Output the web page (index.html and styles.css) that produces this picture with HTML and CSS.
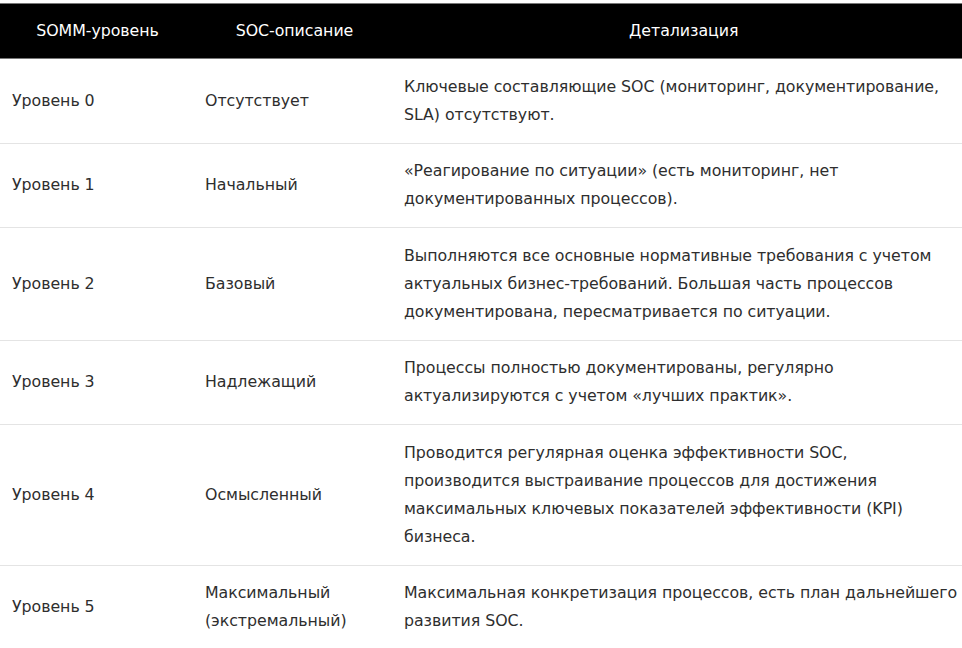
FILE: index.html
```html
<!DOCTYPE html>
<html lang="ru">
<head>
<meta charset="utf-8">
<title>SOMM</title>
<link rel="stylesheet" href="styles.css">
</head>
<body>
<div class="wrap">
<table class="somm">
  <colgroup>
    <col class="c1">
    <col class="c2">
    <col class="c3">
  </colgroup>
  <thead>
    <tr>
      <th>SOMM-уровень</th>
      <th>SOC-описание</th>
      <th class="last">Детализация</th>
    </tr>
  </thead>
  <tbody>
    <tr>
      <td>Уровень 0</td>
      <td>Отсутствует</td>
      <td>Ключевые составляющие SOC (мониторинг, документирование, SLA) отсутствуют.</td>
    </tr>
    <tr>
      <td>Уровень 1</td>
      <td>Начальный</td>
      <td>«Реагирование по ситуации» (есть мониторинг, нет документированных процессов).</td>
    </tr>
    <tr>
      <td>Уровень 2</td>
      <td>Базовый</td>
      <td>Выполняются все основные нормативные требования с учетом актуальных бизнес-требований. Большая часть процессов документирована, пересматривается по ситуации.</td>
    </tr>
    <tr>
      <td>Уровень 3</td>
      <td>Надлежащий</td>
      <td>Процессы полностью документированы, регулярно актуализируются с учетом «лучших практик».</td>
    </tr>
    <tr>
      <td>Уровень 4</td>
      <td>Осмысленный</td>
      <td>Проводится регулярная оценка эффективности SOC, производится выстраивание процессов для достижения максимальных ключевых показателей эффективности (KPI) бизнеса.</td>
    </tr>
    <tr>
      <td>Уровень 5</td>
      <td>Максимальный (экстремальный)</td>
      <td>Максимальная конкретизация процессов, есть план дальнейшего развития SOC.</td>
    </tr>
  </tbody>
</table>
</div>
</body>
</html>
```

FILE: styles.css
```css
html, body {
  margin: 0;
  padding: 0;
  background: #ffffff;
}

.wrap {
  padding-top: 3px;
  width: 962px;
}

.somm {
  width: 962px;
  border-collapse: collapse;
  table-layout: fixed;
  font-family: "DejaVu Sans", Verdana, sans-serif;
  font-size: 15.8px;
  letter-spacing: -0.05px;
  line-height: 28px;
  color: #2e2e2e;
}

.c1 { width: 195px; }
.c2 { width: 199px; }
.c3 { width: 568px; }

.somm th {
  background: #000000;
  color: #ffffff;
  font-weight: normal;
  text-align: center;
  padding: 13px 10px;
  border-top: 1px solid #777777;
  border-bottom: 1px solid #777777;
}

.somm th.last {
  padding-left: 22px;
  border-right: 1px solid #777777;
}

.somm td {
  text-align: left;
  vertical-align: middle;
  padding: 13.75px 10px;
  border-bottom: 1px solid #e4e4e4;
}

.somm td:first-child {
  padding-left: 12px;
}

.somm td:last-child {
  padding-right: 0;
}
```
